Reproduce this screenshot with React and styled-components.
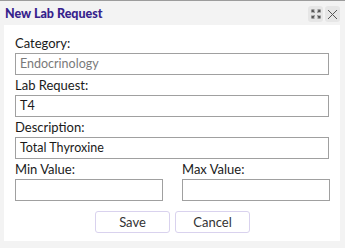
import React from "react";
import styled, { createGlobalStyle } from "styled-components";

const Global = createGlobalStyle`
  html, body { margin: 0; padding: 0; }
  body {
    background: #f3f3f3;
    font-family: Lato, "Noto Sans", sans-serif;
    width: 345px;
    height: 248px;
    overflow: hidden;
  }
`;

const Window = styled.div`
  width: 345px;
  height: 248px;
  box-sizing: border-box;
  border-top: 1px solid #9c9c9c;
  background: #f3f3f3;
  display: flex;
  flex-direction: column;
`;

const TitleBar = styled.div`
  height: 24px;
  display: flex;
  align-items: center;
  justify-content: space-between;
  padding: 0 5px 0 5px;
`;

const Title = styled.div`
  font-weight: 900;
  font-size: 12.5px;
  color: #36228c;
`;

const Tools = styled.div`
  display: flex;
  gap: 2px;
  margin-top: 2px;
`;

const ToolButton = styled.div`
  width: 15px;
  height: 16px;
  border-radius: 3px;
  background: #e6e6e6;
  display: flex;
  align-items: center;
  justify-content: center;
  color: #555;
`;

const Panel = styled.div`
  margin: 0 5px 0 4px;
  background: #ffffff;
  padding: 8px 11px 8px 11px;
  display: flex;
  flex-direction: column;
`;

const Label = styled.div`
  height: 20px;
  line-height: 20px;
  font-size: 13px;
  color: #1a1a1a;
`;

const Input = styled.div`
  height: 22px;
  box-sizing: border-box;
  border: 1px solid #a0a0a0;
  padding: 0 4px;
  font-size: 12.5px;
  line-height: 20px;
  color: ${(p) => (p.$muted ? "#7a7a7a" : "#1a1a1a")};
`;

const Row = styled.div`
  display: grid;
  grid-template-columns: 148px 148px;
  column-gap: 19px;
`;

const Field = styled.div`
  display: flex;
  flex-direction: column;
`;

const Actions = styled.div`
  display: flex;
  justify-content: center;
  gap: 5px;
  margin-top: 10px;
  padding-left: 1px;
`;

const Button = styled.div`
  width: 75px;
  height: 22px;
  box-sizing: border-box;
  border: 1px solid #d9d2ee;
  border-radius: 3px;
  background: #fff;
  font-size: 13px;
  line-height: 20px;
  text-align: center;
  color: #333;
`;

const ExpandIcon = () => (
  <svg width="10" height="10" viewBox="0 0 10 10" fill="none" stroke="#555" strokeWidth="1.2">
    <path d="M1 3.5V1h2.5M1 1l2.5 2.5" />
    <path d="M9 3.5V1H6.5M9 1L6.5 3.5" />
    <path d="M1 6.5V9h2.5M1 9l2.5-2.5" />
    <path d="M9 6.5V9H6.5M9 9L6.5 6.5" />
  </svg>
);

const CloseIcon = () => (
  <svg width="11" height="11" viewBox="0 0 11 11" fill="none" stroke="#555" strokeWidth="1">
    <path d="M1 1l9 9M10 1l-9 9" />
  </svg>
);

export default function App() {
  return (
    <>
      <Global />
      <Window>
        <TitleBar>
          <Title>New Lab Request</Title>
          <Tools>
            <ToolButton><ExpandIcon /></ToolButton>
            <ToolButton><CloseIcon /></ToolButton>
          </Tools>
        </TitleBar>
        <Panel>
          <Label>Category:</Label>
          <Input $muted>Endocrinology</Input>
          <Label>Lab Request:</Label>
          <Input>T4</Input>
          <Label>Description:</Label>
          <Input>Total Thyroxine</Input>
          <Row>
            <Field>
              <Label>Min Value:</Label>
              <Input />
            </Field>
            <Field>
              <Label>Max Value:</Label>
              <Input />
            </Field>
          </Row>
          <Actions>
            <Button>Save</Button>
            <Button>Cancel</Button>
          </Actions>
        </Panel>
      </Window>
    </>
  );
}
